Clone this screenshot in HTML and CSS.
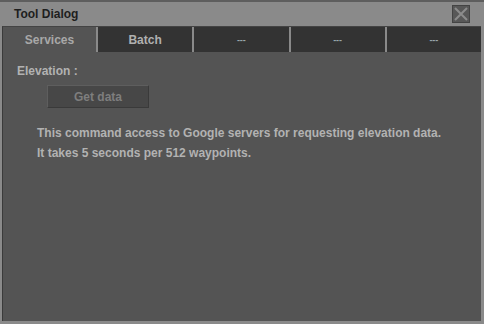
FILE: index.html
```html
<!DOCTYPE html>
<html lang="en">
<head>
    <meta charset="UTF-8">
    <title>Tool Dialog</title>
    <link rel="stylesheet" href="styles.css">
</head>
<body>

    <div class="dialog">
        <div class="titlebar">
            <span class="title">Tool Dialog</span>
            <span class="close-btn">
                <svg width="14" height="14" viewBox="0 0 14 14">
                    <path d="M1 1 L13 13 M13 1 L1 13" stroke="#8c8c8c" stroke-width="2"/>
                </svg>
            </span>
        </div>

        <div class="panel">
            <div class="tabs">
                <div class="tab active">Services</div>
                <div class="tab">Batch</div>
                <div class="tab dash">---</div>
                <div class="tab dash">---</div>
                <div class="tab dash">---</div>
            </div>

            <div class="content">
                <div class="label">Elevation :</div>
                <button class="get-btn">Get data</button>
                <p class="info">
                    This command access to Google servers for requesting elevation data.<br>
                    It takes 5 seconds per 512 waypoints.
                </p>
            </div>
        </div>
    </div>

</body>
</html>
```

FILE: styles.css
```css
body {
    margin: 0;
    padding: 0;
    background-color: #8a8a8a;
    font-family: "Liberation Sans", Arial, sans-serif;
}

.dialog {
    width: 484px;
    height: 324px;
    box-sizing: border-box;
    border-top: 2px solid #5e5e5e;
    background-color: #8a8a8a;
    display: flex;
    flex-direction: column;
}

.titlebar {
    height: 24px;
    display: flex;
    align-items: center;
    justify-content: space-between;
    padding: 0 14px 0 14px;
}

.title {
    font-size: 12px;
    font-weight: bold;
    color: #1e1e1e;
}

.close-btn {
    width: 16px;
    height: 16px;
    background-color: #585858;
    border: 1px solid #444;
    display: flex;
    align-items: center;
    justify-content: center;
}

.panel {
    flex: 1;
    margin: 0 3px 3px 2px;
    border-top: 1px solid #444;
    border-left: 1px solid #3a3a3a;
    background-color: #545454;
    display: flex;
    flex-direction: column;
}

.tabs {
    display: flex;
    gap: 2px;
    height: 25px;
    background-color: #8a8a8a;
}

.tab {
    flex: 1;
    background-color: #333;
    color: #b0b0b0;
    font-size: 12px;
    font-weight: bold;
    display: flex;
    align-items: center;
    justify-content: center;
}

.tab.active {
    flex: 0 0 93px;
    background-color: #545454;
    color: #a8a8a8;
}

.tab.dash {
    color: #9aa6ac;
    font-size: 9px;
}

.content {
    padding: 12px 14px;
    color: #b2b2b2;
    font-size: 12px;
    font-weight: bold;
}

.get-btn {
    display: block;
    margin: 7px 0 0 30px;
    width: 102px;
    height: 23px;
    background-color: #474747;
    border: 1px solid #5e5e5e;
    border-bottom-color: #3a3a3a;
    border-right-color: #3a3a3a;
    color: #7e7e7e;
    font-family: "Liberation Sans", Arial, sans-serif;
    font-size: 12px;
    font-weight: bold;
}

.info {
    margin: 15px 0 0 20px;
    line-height: 20px;
}
```
